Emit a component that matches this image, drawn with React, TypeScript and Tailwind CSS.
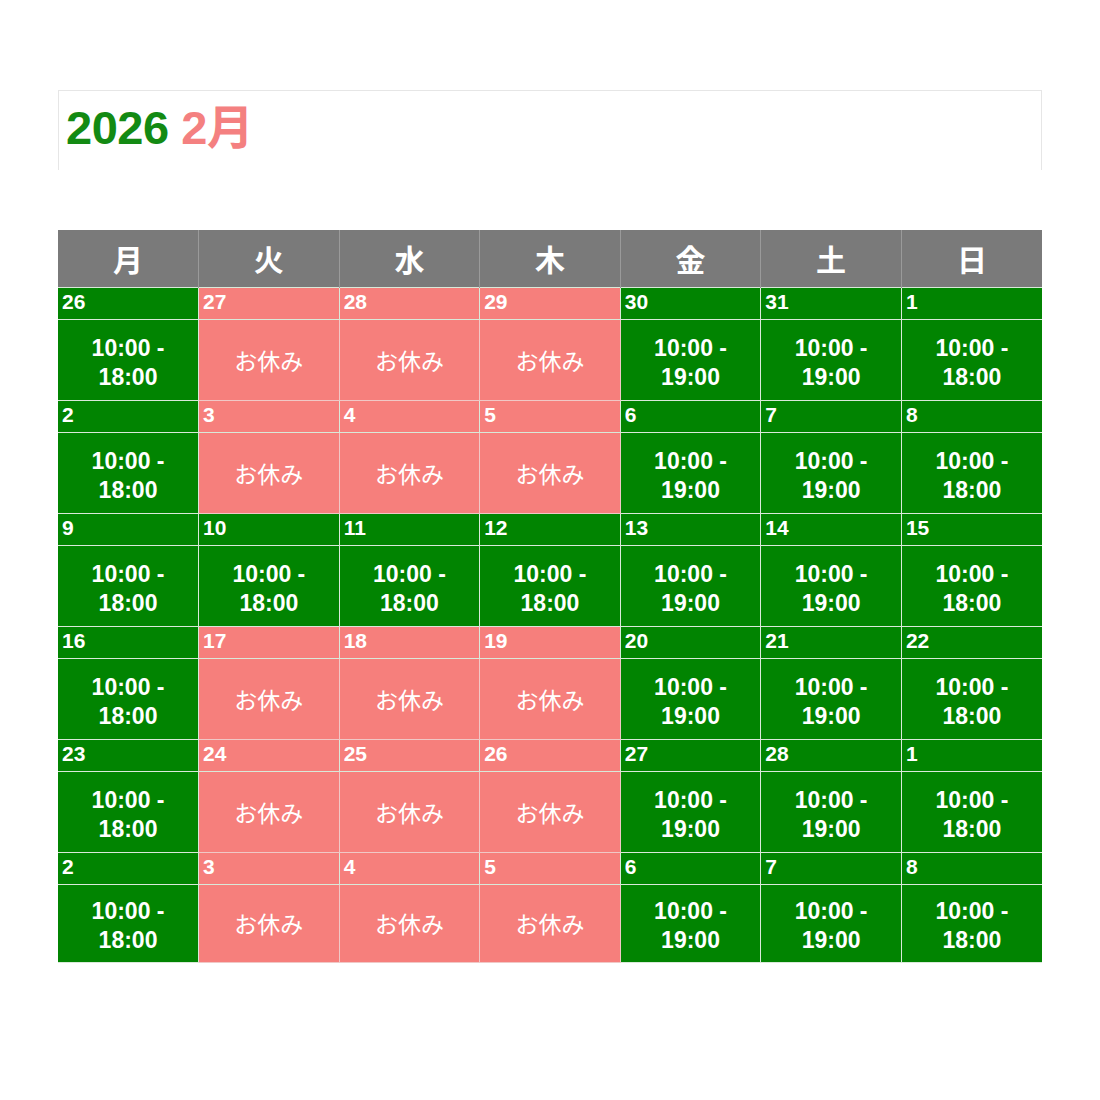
const days = ["月", "火", "水", "木", "金", "土", "日"]

type Cell = { d: number; t: "a" | "b" | "off" }

const weeks: number[][] = [
  [26, 27, 28, 29, 30, 31, 1],
  [2, 3, 4, 5, 6, 7, 8],
  [9, 10, 11, 12, 13, 14, 15],
  [16, 17, 18, 19, 20, 21, 22],
  [23, 24, 25, 26, 27, 28, 1],
  [2, 3, 4, 5, 6, 7, 8],
]

function cellsFor(week: number[], wi: number): Cell[] {
  return week.map((d, i) => {
    if (wi !== 2 && i >= 1 && i <= 3) return { d, t: "off" }
    if (i === 4 || i === 5) return { d, t: "b" }
    return { d, t: "a" }
  })
}

const font = { fontFamily: '"Liberation Sans", Arial, "Noto Sans CJK JP", sans-serif' }

export default function App() {
  return (
    <div className="min-h-[1100px] w-[1100px] bg-white pt-[90px]" style={font}>
      <div className="mx-[58px] h-[80px] border-x border-t border-[#e6e6e6] pl-[7px] pt-[12px]">
        <h1 className="text-[47px] font-bold leading-[50px] tracking-[-0.5px]">
          <span className="text-[#138a13]">2026</span>{" "}
          <span className="text-[#f48080]">2月</span>
        </h1>
      </div>

      <table className="mx-[58px] mt-[60px] w-[984px] table-fixed border-collapse text-white">
        <thead>
          <tr>
            {days.map((d) => (
              <th
                key={d}
                className="h-[57px] border-x border-[#9a9a9a] bg-[#7a7a7a] pt-[5px] text-[30px] font-bold first:border-l-0 last:border-r-0"
              >
                {d}
              </th>
            ))}
          </tr>
        </thead>
        <tbody>
          {weeks.map((w, wi) => {
            const cells = cellsFor(w, wi)
            const last = wi === weeks.length - 1
            return [
              <tr key={`d${wi}`}>
                {cells.map((c, i) => (
                  <td
                    key={i}
                    className={`h-[32px] border border-[#d9e9d9] px-[4px] pb-[3px] align-middle text-[21px] font-bold leading-none first:border-l-0 last:border-r-0 ${
                      c.t === "off" ? "bg-[#f67f7c]" : "bg-[#018401]"
                    }`}
                  >
                    {c.d}
                  </td>
                ))}
              </tr>,
              <tr key={`c${wi}`} className={last ? "h-[78px]" : "h-[81px]"}>
                {cells.map((c, i) =>
                  c.t === "off" ? (
                    <td
                      key={i}
                      className="border border-[#f0c8c6] bg-[#f67f7c] pt-[1px] text-center align-middle text-[23px] leading-none first:border-l-0 last:border-r-0"
                      style={{ fontFamily: '"Noto Sans CJK JP", sans-serif' }}
                    >
                      お休み
                    </td>
                  ) : (
                    <td
                      key={i}
                      className="border border-[#d9e9d9] bg-[#018401] pt-[6px] text-center align-middle text-[23px] font-bold leading-[29px] first:border-l-0 last:border-r-0"
                    >
                      10:00 -
                      <br />
                      {c.t === "b" ? "19:00" : "18:00"}
                    </td>
                  )
                )}
              </tr>,
            ]
          })}
        </tbody>
      </table>
    </div>
  )
}
